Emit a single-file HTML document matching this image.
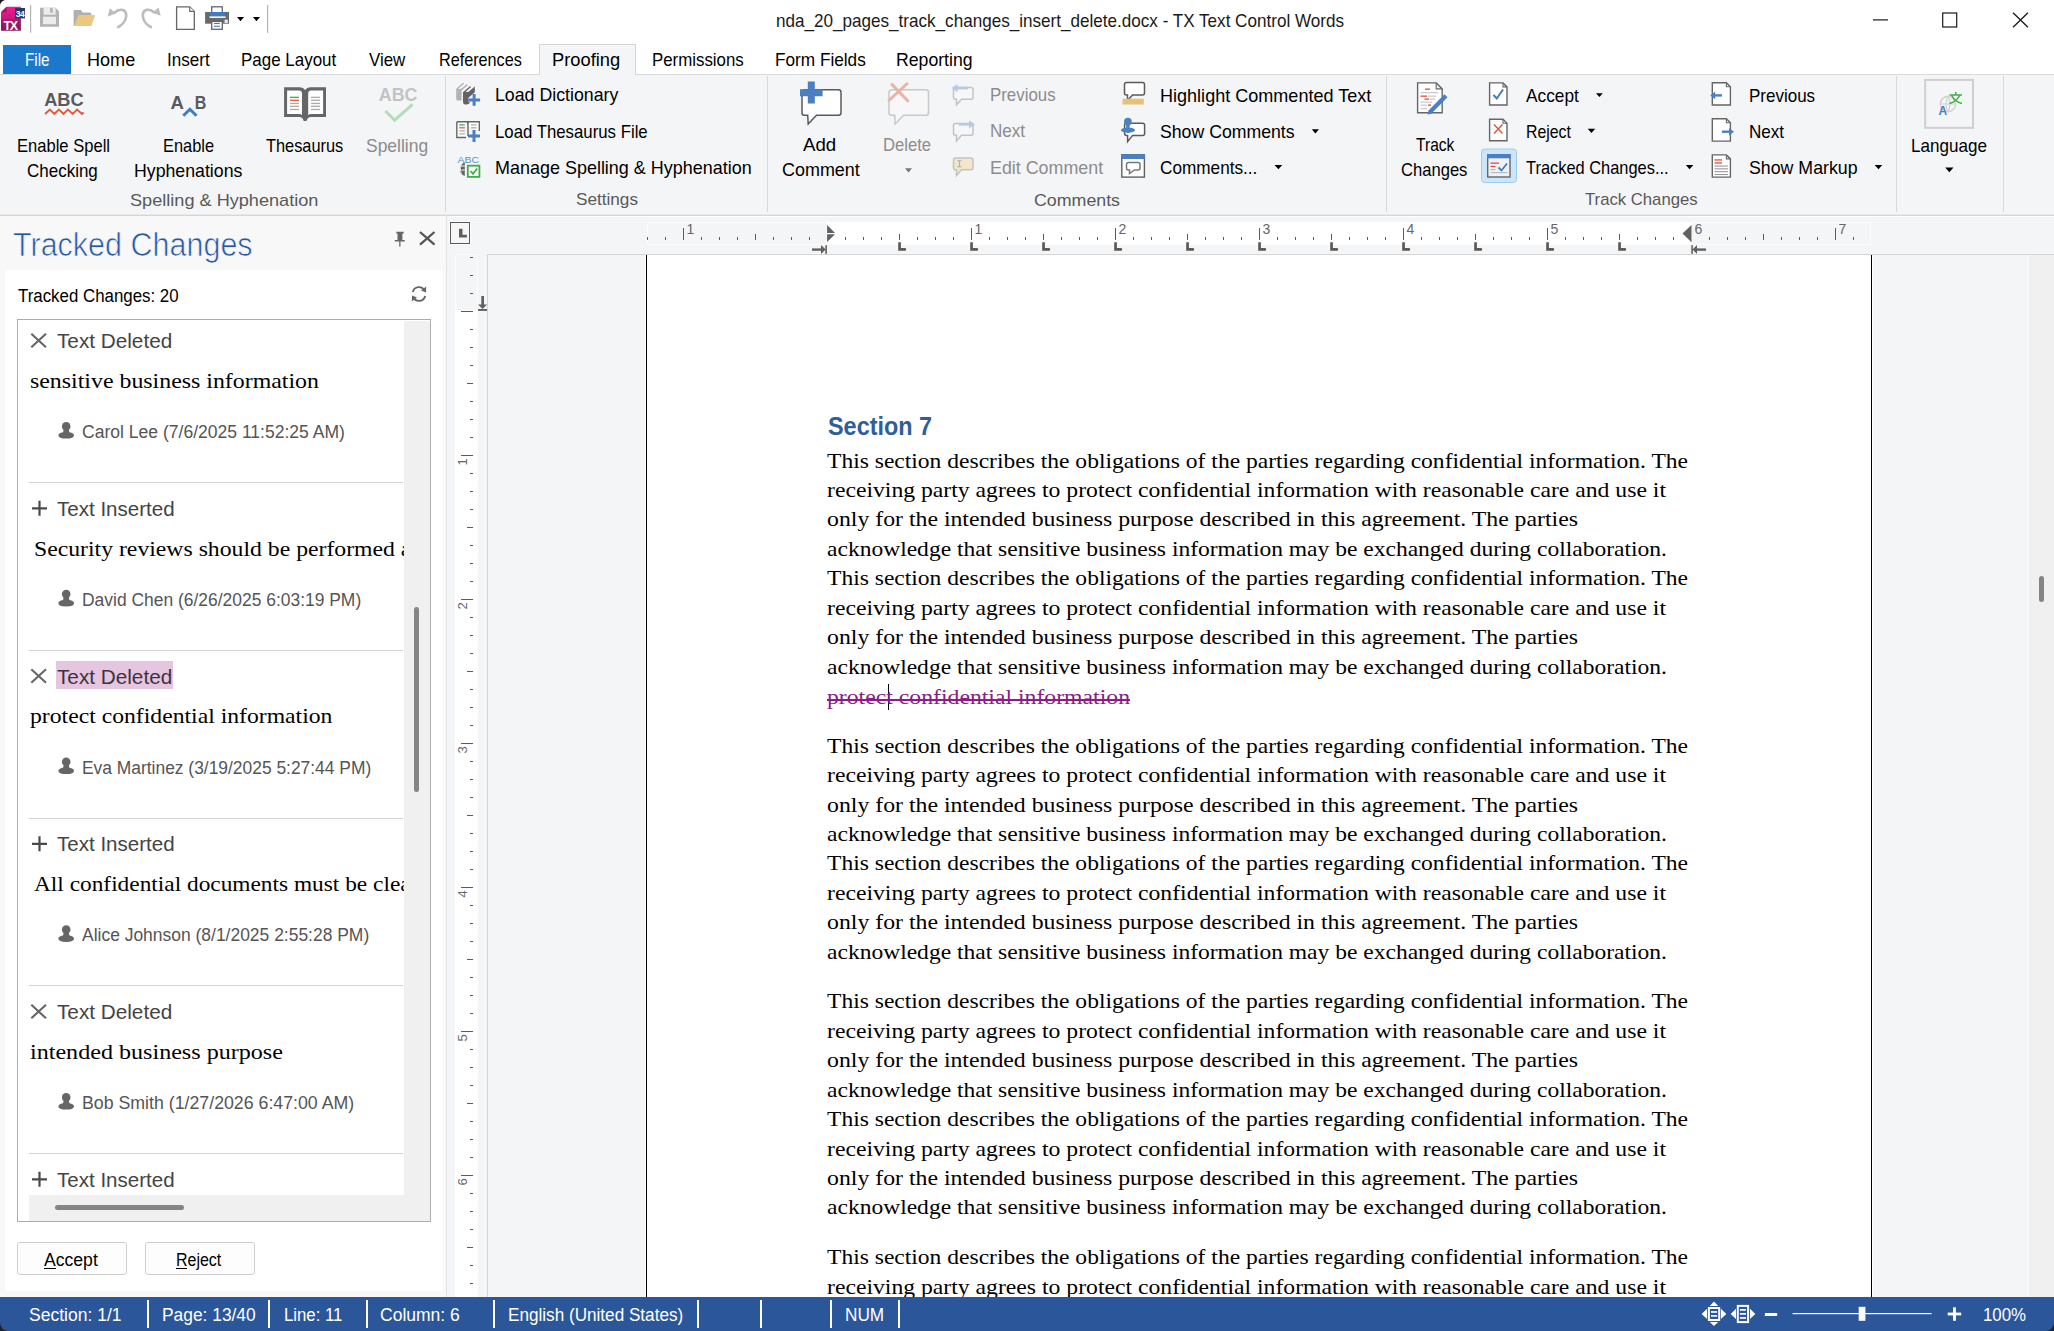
<!DOCTYPE html>
<html><head><meta charset="utf-8"><title>TX Text Control Words</title>
<style>
html,body{margin:0;padding:0;}
body{width:2054px;height:1331px;overflow:hidden;position:relative;background:#fff;font-family:"Liberation Sans",sans-serif;}
.t{position:absolute;white-space:pre;line-height:1;transform-origin:0 0;font-kerning:normal}
svg{overflow:visible}
</style></head><body>
<div style="position:absolute;left:0px;top:0px;width:2054px;height:75px;background:#fff"></div>
<div style="position:absolute;left:0px;top:74px;width:2054px;height:1px;background:#d9d9d9"></div>
<div style="position:absolute;left:0px;top:75px;width:2054px;height:139px;background:#f4f5f7"></div>
<div style="position:absolute;left:0px;top:214px;width:2054px;height:1px;background:#e9e9e9"></div>
<div style="position:absolute;left:0px;top:215px;width:2054px;height:1px;background:#d6d6d6"></div>
<div style="position:absolute;left:3px;top:45px;width:68px;height:29px;background:#1b79cc"></div>
<div style="position:absolute;left:539px;top:44px;width:97px;height:31px;background:#f4f5f7;border:1px solid #d6d6d6;border-bottom:none;box-sizing:border-box"></div>
<div style="position:absolute;left:445px;top:76px;width:1px;height:136px;background:#d9d9d9"></div>
<div style="position:absolute;left:767px;top:76px;width:1px;height:136px;background:#d9d9d9"></div>
<div style="position:absolute;left:1386px;top:76px;width:1px;height:136px;background:#d9d9d9"></div>
<div style="position:absolute;left:1896px;top:76px;width:1px;height:136px;background:#d9d9d9"></div>
<div style="position:absolute;left:2003px;top:76px;width:1px;height:136px;background:#d9d9d9"></div>
<div style="position:absolute;left:0px;top:216px;width:446px;height:1081px;background:#f8f8f8"></div>
<div style="position:absolute;left:446px;top:216px;width:1px;height:1081px;background:#e3e3e3"></div>
<div style="position:absolute;left:5px;top:270px;width:438px;height:1021px;background:#fff"></div>
<div style="position:absolute;left:17px;top:319px;width:414px;height:903px;border:1px solid #adadad;box-sizing:border-box;background:#fff"></div>
<div style="position:absolute;left:29px;top:482px;width:374px;height:1px;background:#d4d4d4"></div>
<div style="position:absolute;left:29px;top:650px;width:374px;height:1px;background:#d4d4d4"></div>
<div style="position:absolute;left:29px;top:818px;width:374px;height:1px;background:#d4d4d4"></div>
<div style="position:absolute;left:29px;top:985px;width:374px;height:1px;background:#d4d4d4"></div>
<div style="position:absolute;left:29px;top:1153px;width:374px;height:1px;background:#d4d4d4"></div>
<div style="position:absolute;left:56px;top:661px;width:117px;height:28px;background:#e5c5df"></div>
<div style="position:absolute;left:17px;top:1242px;width:110px;height:33px;border:1px solid #cfcfcf;border-radius:3px;background:#fdfdfd;box-sizing:border-box"></div>
<div style="position:absolute;left:145px;top:1242px;width:110px;height:33px;border:1px solid #cfcfcf;border-radius:3px;background:#fdfdfd;box-sizing:border-box"></div>
<div style="position:absolute;left:447px;top:216px;width:1607px;height:1081px;background:#f4f5f7"></div>
<div style="position:absolute;left:449px;top:216px;width:1605px;height:1px;background:#fff"></div>
<div style="position:absolute;left:449px;top:221px;width:22px;height:24px;background:#fff"></div>
<div style="position:absolute;left:450px;top:222px;width:20px;height:22px;border:1px solid #5a5a5a;box-sizing:border-box;background:#f6f6f6"></div>
<svg style="position:absolute;left:450px;top:222px;" width="20" height="22" viewBox="0 0 20 22"><path d="M9 6.8 V15.6 H16.9 V12.7 H12.5 V6.8 Z" fill="#5f5f5f"/></svg>
<div style="position:absolute;left:647px;top:222px;width:180px;height:23px;background:#f4f5f7;border:1px solid #fbfbfb;box-sizing:border-box"></div>
<div style="position:absolute;left:827px;top:222px;width:864px;height:23px;background:#fff"></div>
<div style="position:absolute;left:1691px;top:222px;width:180px;height:23px;background:#f4f5f7;border:1px solid #fbfbfb;box-sizing:border-box"></div>
<div style="position:absolute;left:487px;top:253px;width:1567px;height:1px;background:#f6f6f6"></div>
<div style="position:absolute;left:487px;top:254px;width:1567px;height:1px;background:#d5d5d5"></div>
<div style="position:absolute;left:455px;top:254px;width:23px;height:1043px;background:#fff"></div>
<div style="position:absolute;left:455px;top:254px;width:23px;height:57px;background:#f4f5f7;border:1px solid #fbfbfb;box-sizing:border-box"></div>
<div style="position:absolute;left:487px;top:254px;width:1px;height:1043px;background:#d4d4d4"></div>
<div style="position:absolute;left:645px;top:255px;width:1228px;height:1042px;background:#fff"></div>
<div style="position:absolute;left:646px;top:255px;width:1px;height:1042px;background:#000"></div>
<div style="position:absolute;left:1871px;top:255px;width:1px;height:1042px;background:#000"></div>
<div style="position:absolute;left:2028px;top:255px;width:1px;height:1042px;background:#fafafa"></div>
<div style="position:absolute;left:2029px;top:255px;width:25px;height:1042px;background:#f0f0f0"></div>
<div style="position:absolute;left:2039px;top:576px;width:5px;height:26px;background:#858585;border-radius:3px"></div>
<div style="position:absolute;left:44px;top:1268px;width:12px;height:1px;background:#000"></div>
<div style="position:absolute;left:176px;top:1268px;width:11px;height:1px;background:#000"></div>
<div style="position:absolute;left:827px;top:699.2px;width:303px;height:1.6px;background:#8b1c88"></div>
<div style="position:absolute;left:888px;top:684px;width:1px;height:26px;background:#000"></div>
<svg style="position:absolute;left:0;top:0" width="2054" height="1331" viewBox="0 0 2054 1331"><path d="M0 0 H5 Q1 1 0 5 Z" fill="#1a1a1a"/><defs><linearGradient id="gapp" x1="0" y1="0" x2="0" y2="1"><stop offset="0" stop-color="#f01b90"/><stop offset="0.5" stop-color="#c8187e"/><stop offset="0.56" stop-color="#a01a6c"/><stop offset="1" stop-color="#84195a"/></linearGradient></defs><path d="M6.5 6.8 H20.9 V30.7 H1 V12.3 Z" fill="url(#gapp)"/><path d="M1 12.3 L6.5 6.8 V12.3 Z" fill="#a01468"/><rect x="15" y="8" width="10" height="10.4" fill="#1d3b6b"/><text x="20" y="16.6" font-family="Liberation Sans" font-weight="700" font-size="8.5" fill="#fff" text-anchor="middle" letter-spacing="-0.6">34</text><text x="10.2" y="29.6" font-family="Liberation Sans" font-weight="700" font-size="12.5" fill="#fff" text-anchor="middle" letter-spacing="-1.2">TX</text><rect x="30" y="5" width="1.2" height="27.7" fill="#b5b5b5"/><rect x="267" y="5" width="1.2" height="27.9" fill="#b5b5b5"/><path d="M40 7.8 H55.5 L59 11.3 V26.7 H40 Z" fill="#b3b3b3"/><rect x="43.6" y="7.8" width="12" height="6.9" fill="#ececec"/><rect x="50.1" y="7.8" width="2.7" height="5" fill="#b3b3b3"/><rect x="43" y="16.7" width="13" height="7.5" fill="#ececec"/><path d="M73.6 11.3 Q73.6 10.1 75 10.1 H81 L82.5 12.6 H90 Q91.3 12.6 91.3 14 V25.9 H74.6 Q73.6 25.9 73.6 25 Z" fill="#b0b0b0"/><path d="M78.4 15.1 H94 Q95.2 15.1 94.8 16.3 L91.3 25.9 H75.5 Q74.3 25.9 74.8 24.7 Z" fill="#ecc77d"/><path d="M114.5 12.8 C119 8.2, 126.5 8.6, 126.2 16 C126 21, 121.5 25.5, 117.2 27.6" stroke="#bdbdbd" stroke-width="2.7" fill="none"/><path d="M107.7 16.4 L109.8 8.2 L116.2 13.4 Z" fill="#bdbdbd"/><path d="M154.5 12.8 C150 8.2, 142.5 8.6, 142.8 16 C143 21, 147.5 25.5, 151.8 27.6" stroke="#bdbdbd" stroke-width="2.7" fill="none"/><path d="M160.7 15.8 L158.6 7.6 L152.2 12.8 Z" fill="#bdbdbd"/><path d="M176.6 6.9 H189.8 L194.3 11.4 V29.3 H176.6 Z" fill="#fff" stroke="#666" stroke-width="1.3"/><path d="M189.8 6.9 V11.4 H194.3" fill="#fff" stroke="#666" stroke-width="1.2"/><rect x="211.7" y="6.8" width="10.6" height="6.6" fill="#fff" stroke="#666" stroke-width="1.3"/><rect x="205.1" y="12" width="23.9" height="11.7" fill="#6a6a6a"/><rect x="210" y="12" width="15" height="4.4" fill="#3f7cc0"/><rect x="209.5" y="16.4" width="16" height="1.5" fill="#fff"/><rect x="224.6" y="19.7" width="3.2" height="3.2" fill="#eee"/><rect x="211.7" y="21.4" width="10.6" height="7.9" fill="#fff" stroke="#666" stroke-width="1.3"/><rect x="214" y="22.9" width="5.8" height="1.1" fill="#3f7cc0"/><rect x="214" y="25.7" width="5.8" height="1.1" fill="#3f7cc0"/><path d="M237 17 H244 L240.5 21.3 Z" fill="#000"/><path d="M252.9 17 H260 L256.45 21.3 Z" fill="#000"/><rect x="1873" y="19.3" width="15" height="1.2" fill="#1a1a1a"/><rect x="1942.7" y="13" width="14" height="14" fill="none" stroke="#1a1a1a" stroke-width="1.2"/><path d="M2013 12.7 L2028 27.2 M2028 12.7 L2013 27.2" stroke="#1a1a1a" stroke-width="1.3"/><text x="44.2" y="106.3" font-family="Liberation Sans" font-weight="700" font-size="19" fill="#5a5a5a" textLength="39.5" lengthAdjust="spacingAndGlyphs">ABC</text><path d="M45 114 L49.9 109.5 L54.3 114 L58.9 109.5 L63.5 114 L67.9 109.5 L72.7 114 L77.1 109.5 L82 114 L83.6 112.5" stroke="#de5b3c" stroke-width="1.9" fill="none"/><text x="170.6" y="108.5" font-family="Liberation Sans" font-weight="700" font-size="19" fill="#5a5a5a" textLength="13.4" lengthAdjust="spacingAndGlyphs">A</text><text x="194.8" y="108.5" font-family="Liberation Sans" font-weight="700" font-size="19" fill="#5a5a5a" textLength="11.6" lengthAdjust="spacingAndGlyphs">B</text><path d="M183.3 115.8 L189.9 109.3 L196.5 115.8" stroke="#3f7cc0" stroke-width="3" fill="none"/><path d="M284.1 87.3 H300 Q303.5 87.3 305.1 90 Q306.7 87.3 310.2 87.3 H326 V117 H311 Q307.5 117 306.5 120.9 H303.7 Q302.7 117 299.2 117 H284.1 Z" fill="#666"/><path d="M287.1 90.6 H299 Q302 90.6 302 93.6 V115.1 Q301 114 298.5 114 H287.1 Z" fill="#fff"/><path d="M323.1 90.6 H311.2 Q308.2 90.6 308.2 93.6 V115.1 Q309.2 114 311.7 114 H323.1 Z" fill="#fff"/><rect x="290" y="96.7" width="9" height="1.3" fill="#3cb043"/><rect x="311" y="96.7" width="9" height="1.3" fill="#aaa"/><rect x="290" y="99.60000000000001" width="9" height="1.3" fill="#de5b3c"/><rect x="311" y="99.60000000000001" width="9" height="1.3" fill="#aaa"/><rect x="290" y="102.80000000000001" width="9" height="1.3" fill="#aaa"/><rect x="311" y="102.80000000000001" width="9" height="1.3" fill="#aaa"/><rect x="290" y="105.7" width="9" height="1.3" fill="#aaa"/><rect x="311" y="105.7" width="9" height="1.3" fill="#aaa"/><rect x="290" y="108.80000000000001" width="9" height="1.3" fill="#aaa"/><rect x="311" y="108.80000000000001" width="9" height="1.3" fill="#aaa"/><text x="378.8" y="100.5" font-family="Liberation Sans" font-weight="700" font-size="19" fill="#c3c3c3" textLength="38.6" lengthAdjust="spacingAndGlyphs">ABC</text><path d="M385.5 111 L394.6 120.2 L412.6 104.3" stroke="#b3ddb7" stroke-width="3" fill="none"/><path d="M456.2 88.8 L462.6 82.9 Q464.3 82.2 463.8 83.8 L458.3 88.7 Q459.5 89.3 461.6 88.6 L466.2 84.4 Q467.9 83.6 467.5 85.4 L461.6 90.6 V100.6 H457.8 Q456.2 100.6 456.2 99 Z" fill="#b3b3b3"/><path d="M463 92.2 L469.6 86.4 Q471.2 85.6 470.8 87.3 L465.6 91.8 Q466.8 92.4 468.6 91.8 L474.8 86.6 V92.2 L468.2 98 V101.5 L470 102.5 Q469 104.4 466.5 104.4 H465 Q463 104.4 463 102 Z" fill="#636363"/><path d="M468.1 100 H480.1 M474.1 94 V105.7" stroke="#4a7fc1" stroke-width="3"/><path d="M456.8 121.7 H467.5 Q468 126 468 126 V121.7 H479.3 V131 M468 126 V136 M456.8 121.7 V137.5 H466" stroke="#666" stroke-width="1.4" fill="#fff"/><rect x="459.2" y="124.3" width="5.6" height="1.2" fill="#3cb043"/><rect x="459.2" y="127.2" width="5.6" height="1.2" fill="#de5b3c"/><rect x="459.2" y="130.3" width="5.6" height="1.2" fill="#aaa"/><rect x="459.2" y="133.3" width="5.6" height="1.2" fill="#aaa"/><rect x="471" y="124.3" width="5.6" height="1.2" fill="#aaa"/><rect x="471" y="127.2" width="5.6" height="1.2" fill="#aaa"/><path d="M468 136 H480 M474 130 V142" stroke="#4a7fc1" stroke-width="3"/><text x="457.6" y="162.8" font-family="Liberation Sans" font-size="9.5" fill="#5b8fd0" textLength="21.4" lengthAdjust="spacingAndGlyphs">ABC</text><path d="M464.8 162.6 A7 7 0 0 0 464.8 176 Z" fill="#666"/><path d="M459 166 H464.8 M458.2 170 H464.8 M461.5 163 Q459.5 169 461.5 175.5" stroke="#f3f4f6" stroke-width="1"/><rect x="467.8" y="165.7" width="11.6" height="11.2" fill="#fff" stroke="#3cb043" stroke-width="1.8"/><path d="M470.5 171 L473 173.8 L477.2 168.5" stroke="#3cb043" stroke-width="1.8" fill="none"/><path d="M805 89.8 H838.5 Q841 89.8 841 92.3 V112.8 Q841 115.3 838.5 115.3 H816.5 L808.2 124 L807.7 115.3 H804.3 Q802 115.3 802 112.8 V92.8 Q802 89.8 805 89.8 Z" fill="#fff" stroke="#5a5a5a" stroke-width="1.5"/><path d="M800 92.8 H822.6 M811.3 81.6 V103.6" stroke="#4a7fc1" stroke-width="7"/><path d="M892 89.8 H926 Q928.5 89.8 928.5 92.3 V112.8 Q928.5 115.3 926 115.3 H903.5 L895.2 124 L894.7 115.3 H891.5 Q889 115.3 889 112.8 V92.8 Q889 89.8 892 89.8 Z" fill="#f7f7f7" stroke="#c9c9c9" stroke-width="1.5"/><path d="M888.3 101 L907.8 83 M891.2 83.6 L908.6 101.8" stroke="#e9b4a8" stroke-width="3"/><path d="M905 168.2 H912 L908.5 172.4 Z" fill="#777"/><path d="M955.5 87.5 H971 Q973 87.5 973 89.5 V97.3 Q973 99.3 971 99.3 H961.5 L956.5 104.9 L956.5 99.3 H955.5 Q953.5 99.3 953.5 97.3 V89.5 Q953.5 87.5 955.5 87.5 Z" fill="#f7f7f7" stroke="#c3c3c3" stroke-width="1.5"/><path d="M956 88.1 H968" stroke="#b3cbe5" stroke-width="2.6"/><path d="M951.5 88.1 L957.5 84 V92.2 Z" fill="#b3cbe5"/><path d="M955.5 123.5 H971 Q973 123.5 973 125.5 V133.3 Q973 135.3 971 135.3 H961.5 L956.5 141 L956.5 135.3 H955.5 Q953.5 135.3 953.5 133.3 V125.5 Q953.5 123.5 955.5 123.5 Z" fill="#f7f7f7" stroke="#c3c3c3" stroke-width="1.5"/><path d="M958.8 124.3 H970" stroke="#b3cbe5" stroke-width="2.6"/><path d="M975 124.3 L969 120.2 V128.4 Z" fill="#b3cbe5"/><path d="M955.5 158 H971 Q973 158 973 160 V167.7 Q973 169.7 971 169.7 H961.5 L956.5 175.4 L956.5 169.7 H955.5 Q953.5 169.7 953.5 167.7 V160 Q953.5 158 955.5 158 Z" fill="#f4e6cb" stroke="#c3c3c3" stroke-width="1.5"/><path d="M957.3 160.8 H961.5 M959.4 160.8 V166.7 M957.3 166.7 H961.5" stroke="#aaa" stroke-width="1"/><path d="M1126.5 82.5 H1142.5 Q1144.5 82.5 1144.5 84.5 V93 Q1144.5 95 1142.5 95 H1132.5 L1127.5 100.5 L1127.5 95 H1126.5 Q1124.5 95 1124.5 93 V84.5 Q1124.5 82.5 1126.5 82.5 Z" fill="#fff" stroke="#5a5a5a" stroke-width="1.5"/><rect x="1122.6" y="98.7" width="21.2" height="5.8" fill="#e8c274"/><path d="M1126.6 123.2 H1142.6 Q1144.6 123.2 1144.6 125.2 V133.4 Q1144.6 135.4 1142.6 135.4 H1132.6 L1127.6 141.7 L1127.6 135.4 H1126.6 Q1124.6 135.4 1124.6 133.4 V125.2 Q1124.6 123.2 1126.6 123.2 Z" fill="#fff" stroke="#5a5a5a" stroke-width="1.5"/><circle cx="1127.9" cy="121.6" r="3.9" fill="#4a82c0"/><rect x="1126.2" y="124" width="3.4" height="4" fill="#4a82c0"/><ellipse cx="1128" cy="130.2" rx="6.9" ry="2.7" fill="#4a82c0"/><rect x="1121.8" y="154.8" width="22.6" height="22.3" fill="#fff" stroke="#5f5f5f" stroke-width="1.4"/><rect x="1121.2" y="154.2" width="23.8" height="4.8" fill="#4a7fc1"/><path d="M1128.5 162.5 H1138 Q1140 162.5 1140 164.5 V168 Q1140 170 1138 170 H1134.5 L1129.5 173.5 L1129.5 170 H1128.5 Q1126.5 170 1126.5 168 V164.5 Q1126.5 162.5 1128.5 162.5 Z" fill="#fff" stroke="#777" stroke-width="1.5"/><path d="M1311.8 129.2 H1319 L1315.4 133.5 Z" fill="#000"/><path d="M1274.5 165 H1282.3 L1278.4 169.3 Z" fill="#000"/><path d="M1417.6 82.9 H1436.2 L1442.2 88.9 V112.8 H1417.6 Z" fill="#fff" stroke="#666" stroke-width="1.4"/><path d="M1436.2 82.9 V88.9 H1442.2" fill="none" stroke="#666" stroke-width="1.1199999999999999"/><rect x="1425" y="88.5" width="5" height="1.3" fill="#e04c3c"/><rect x="1420.5" y="92" width="17.5" height="1.3" fill="#ccc"/><rect x="1420.5" y="95.5" width="6.5" height="1.3" fill="#e04c3c"/><rect x="1428" y="95.5" width="8" height="1.3" fill="#ccc"/><rect x="1424.5" y="98.5" width="4.5" height="1.3" fill="#e04c3c"/><rect x="1430" y="98.5" width="5" height="1.3" fill="#ccc"/><rect x="1420.5" y="101.5" width="11.5" height="1.3" fill="#ccc"/><rect x="1428" y="104.5" width="3" height="1.3" fill="#e04c3c"/><rect x="1420.5" y="104.5" width="6.5" height="1.3" fill="#ccc"/><rect x="1420.5" y="108" width="6.5" height="1.3" fill="#ccc"/><path d="M1429.5 112.5 L1446 95.7" stroke="#4a7fc1" stroke-width="4.2"/><path d="M1427.5 114.8 L1428.3 111 L1431 113.5 Z" fill="#4a7fc1"/><path d="M1489.6 82.9 H1503 L1507 86.9 V105 H1489.6 Z" fill="#fff" stroke="#666" stroke-width="1.4"/><path d="M1503 82.9 V86.9 H1507" fill="none" stroke="#666" stroke-width="1.1199999999999999"/><path d="M1493.5 95 L1496.8 98.5 L1503 89.5" stroke="#3f7cc0" stroke-width="2" fill="none"/><path d="M1489.6 119.2 H1503 L1507 123.2 V140.7 H1489.6 Z" fill="#fff" stroke="#666" stroke-width="1.4"/><path d="M1503 119.2 V123.2 H1507" fill="none" stroke="#666" stroke-width="1.1199999999999999"/><path d="M1494 124.5 L1502.5 133.5 M1502.5 124.5 L1494 133.5" stroke="#d9553c" stroke-width="1.4"/><rect x="1481.5" y="149" width="35" height="33.5" rx="3" fill="#cce5f8" stroke="#9bcdf3" stroke-width="1"/><rect x="1487.7" y="154.7" width="22.3" height="22.3" fill="#eef2f6" stroke="#666" stroke-width="1.4"/><rect x="1487" y="154" width="23.7" height="4.3" fill="#4a7fc1"/><rect x="1490.5" y="162.5" width="8.5" height="1.3" fill="#e04c3c"/><rect x="1490.5" y="165.8" width="5" height="1.3" fill="#e04c3c"/><rect x="1490.5" y="169" width="5" height="1.2" fill="#bbb"/><rect x="1490.5" y="172" width="17" height="1.2" fill="#bbb"/><path d="M1498.5 167.5 L1501.5 170.5 L1507 163.5" stroke="#3f7cc0" stroke-width="1.8" fill="none"/><path d="M1596 93.2 H1602.8 L1599.4 97 Z" fill="#000"/><path d="M1587.7 128.7 H1595.2 L1591.45 133.1 Z" fill="#000"/><path d="M1685.8 165 H1693.3 L1689.55 169.3 Z" fill="#000"/><path d="M1712.3 82.8 H1726.4 L1730.4 86.8 V105 H1712.3 Z" fill="#fff" stroke="#666" stroke-width="1.4"/><path d="M1726.4 82.8 V86.8 H1730.4" fill="none" stroke="#666" stroke-width="1.1199999999999999"/><path d="M1714 95.4 H1722" stroke="#4a7fc1" stroke-width="2.4"/><path d="M1710.3 95.4 L1715.2 91.6 V99.2 Z" fill="#4a7fc1"/><path d="M1712.3 118.7 H1726.4 L1730.4 122.7 V141.1 H1712.3 Z" fill="#fff" stroke="#666" stroke-width="1.4"/><path d="M1726.4 118.7 V122.7 H1730.4" fill="none" stroke="#666" stroke-width="1.1199999999999999"/><path d="M1721.9 131.7 H1730" stroke="#4a7fc1" stroke-width="2.4"/><path d="M1734 131.7 L1729 127.9 V135.5 Z" fill="#4a7fc1"/><path d="M1712.3 154.9 H1726.4 L1730.4 158.9 V177.1 H1712.3 Z" fill="#fff" stroke="#666" stroke-width="1.4"/><path d="M1726.4 154.9 V158.9 H1730.4" fill="none" stroke="#666" stroke-width="1.1199999999999999"/><rect x="1714.5" y="159.3" width="7.5" height="1.3" fill="#e04c3c"/><rect x="1714.5" y="162.3" width="7.5" height="1.3" fill="#e04c3c"/><rect x="1714.5" y="165.5" width="13.5" height="1.1" fill="#999"/><rect x="1714.5" y="168.3" width="13.5" height="1.1" fill="#999"/><rect x="1714.5" y="171.1" width="13.5" height="1.1" fill="#999"/><rect x="1714.5" y="174" width="13.5" height="1.1" fill="#999"/><path d="M1874.7 165 H1882.3 L1878.5 169.3 Z" fill="#000"/><rect x="1925.2" y="79.9" width="47.8" height="47.9" fill="none" stroke="#cfcfcf" stroke-width="2"/><circle cx="1948" cy="104" r="7.6" fill="none" stroke="#d3d3d3" stroke-width="1.6"/><path d="M1940.5 104 H1955.5 M1948 96.5 Q1944 104 1948 111.5 Q1952 104 1948 96.5" stroke="#d3d3d3" stroke-width="1.2" fill="none"/><text x="1938.5" y="115.2" font-family="Liberation Sans" font-weight="700" font-size="12" fill="#4a7fc1">A</text><path d="M1949.5 95 H1962 M1955.7 92 V95 M1951.5 95 Q1955 102 1962 103.5 M1960 95 Q1956 102 1949.5 103.5" stroke="#3cb043" stroke-width="1.5" fill="none"/><path d="M1945.2 167.6 H1953.5 L1949.35 172.2 Z" fill="#000"/><path d="M396.3 231.8 H403.7 V233.5 H402.4 V240 H404.8 V241.6 H394.8 V240 H397.5 V233.5 H396.3 Z" fill="#666"/><rect x="399.2" y="241" width="1.3" height="5.5" fill="#666"/><path d="M420 232 L434.5 244.6 M434.5 232 L420 244.6" stroke="#555" stroke-width="2.3"/><path d="M412.8 292 A6.4 6.4 0 0 1 424.5 290.2 M425.2 296 A6.4 6.4 0 0 1 413.5 297.8" stroke="#666" stroke-width="1.9" fill="none"/><path d="M426.2 286.5 L426 292.5 L421 290.5 Z M411.8 301.5 L412 295.5 L417 297.5 Z" fill="#666"/><path d="M31.3 333.8 L46 347.3 M46 333.8 L31.3 347.3" stroke="#666" stroke-width="2.1"/><circle cx="66.2" cy="426.4" r="4.3" fill="#666"/><path d="M63.8 429.5 H68.6 L69.5 432.3 Q74 433.0 74 435.5 Q74 438.6 66.2 438.6 Q58.4 438.6 58.4 435.5 Q58.4 433.0 63 432.3 Z" fill="#666"/><path d="M32 508.3 H47 M39.5 500.8 V515.8" stroke="#4a4a4a" stroke-width="2.2"/><circle cx="66.2" cy="594.1" r="4.3" fill="#666"/><path d="M63.8 597.2 H68.6 L69.5 600.0 Q74 600.8 74 603.2 Q74 606.4 66.2 606.4 Q58.4 606.4 58.4 603.2 Q58.4 600.8 63 600.0 Z" fill="#666"/><path d="M31.3 669.3 L46 682.8 M46 669.3 L31.3 682.8" stroke="#666" stroke-width="2.1"/><circle cx="66.2" cy="761.9" r="4.3" fill="#666"/><path d="M63.8 765.0 H68.6 L69.5 767.8 Q74 768.5 74 771.0 Q74 774.1 66.2 774.1 Q58.4 774.1 58.4 771.0 Q58.4 768.5 63 767.8 Z" fill="#666"/><path d="M32 843.8 H47 M39.5 836.3 V851.3" stroke="#4a4a4a" stroke-width="2.2"/><circle cx="66.2" cy="929.6" r="4.3" fill="#666"/><path d="M63.8 932.8 H68.6 L69.5 935.5 Q74 936.2 74 938.8 Q74 941.9 66.2 941.9 Q58.4 941.9 58.4 938.8 Q58.4 936.2 63 935.5 Z" fill="#666"/><path d="M31.3 1004.8 L46 1018.3 M46 1004.8 L31.3 1018.3" stroke="#666" stroke-width="2.1"/><circle cx="66.2" cy="1097.4" r="4.3" fill="#666"/><path d="M63.8 1100.5 H68.6 L69.5 1103.3 Q74 1104.0 74 1106.5 Q74 1109.6 66.2 1109.6 Q58.4 1109.6 58.4 1106.5 Q58.4 1104.0 63 1103.3 Z" fill="#666"/><path d="M32 1179.3 H47 M39.5 1171.8 V1186.8" stroke="#4a4a4a" stroke-width="2.2"/></svg>
<svg style="position:absolute;left:0;top:0" width="2054" height="1331" viewBox="0 0 2054 1331"><rect x="647" y="237" width="1" height="3" fill="#5c5c5c"/><rect x="665" y="237" width="1" height="3" fill="#5c5c5c"/><rect x="683" y="228" width="1" height="12" fill="#5c5c5c"/><text x="686.5" y="233.8" font-family="Liberation Sans" font-size="14" fill="#666">1</text><rect x="701" y="237" width="1" height="3" fill="#5c5c5c"/><rect x="719" y="237" width="1" height="3" fill="#5c5c5c"/><rect x="737" y="237" width="1" height="3" fill="#5c5c5c"/><rect x="755" y="234" width="1" height="6" fill="#5c5c5c"/><rect x="773" y="237" width="1" height="3" fill="#5c5c5c"/><rect x="791" y="237" width="1" height="3" fill="#5c5c5c"/><rect x="809" y="237" width="1" height="3" fill="#5c5c5c"/><rect x="845" y="237" width="1" height="3" fill="#5c5c5c"/><rect x="863" y="237" width="1" height="3" fill="#5c5c5c"/><rect x="881" y="237" width="1" height="3" fill="#5c5c5c"/><rect x="899" y="234" width="1" height="6" fill="#5c5c5c"/><rect x="917" y="237" width="1" height="3" fill="#5c5c5c"/><rect x="935" y="237" width="1" height="3" fill="#5c5c5c"/><rect x="953" y="237" width="1" height="3" fill="#5c5c5c"/><rect x="971" y="228" width="1" height="12" fill="#5c5c5c"/><text x="974.5" y="233.8" font-family="Liberation Sans" font-size="14" fill="#666">1</text><rect x="989" y="237" width="1" height="3" fill="#5c5c5c"/><rect x="1007" y="237" width="1" height="3" fill="#5c5c5c"/><rect x="1025" y="237" width="1" height="3" fill="#5c5c5c"/><rect x="1043" y="234" width="1" height="6" fill="#5c5c5c"/><rect x="1061" y="237" width="1" height="3" fill="#5c5c5c"/><rect x="1079" y="237" width="1" height="3" fill="#5c5c5c"/><rect x="1097" y="237" width="1" height="3" fill="#5c5c5c"/><rect x="1115" y="228" width="1" height="12" fill="#5c5c5c"/><text x="1118.5" y="233.8" font-family="Liberation Sans" font-size="14" fill="#666">2</text><rect x="1133" y="237" width="1" height="3" fill="#5c5c5c"/><rect x="1151" y="237" width="1" height="3" fill="#5c5c5c"/><rect x="1169" y="237" width="1" height="3" fill="#5c5c5c"/><rect x="1187" y="234" width="1" height="6" fill="#5c5c5c"/><rect x="1205" y="237" width="1" height="3" fill="#5c5c5c"/><rect x="1223" y="237" width="1" height="3" fill="#5c5c5c"/><rect x="1241" y="237" width="1" height="3" fill="#5c5c5c"/><rect x="1259" y="228" width="1" height="12" fill="#5c5c5c"/><text x="1262.5" y="233.8" font-family="Liberation Sans" font-size="14" fill="#666">3</text><rect x="1277" y="237" width="1" height="3" fill="#5c5c5c"/><rect x="1295" y="237" width="1" height="3" fill="#5c5c5c"/><rect x="1313" y="237" width="1" height="3" fill="#5c5c5c"/><rect x="1331" y="234" width="1" height="6" fill="#5c5c5c"/><rect x="1349" y="237" width="1" height="3" fill="#5c5c5c"/><rect x="1367" y="237" width="1" height="3" fill="#5c5c5c"/><rect x="1385" y="237" width="1" height="3" fill="#5c5c5c"/><rect x="1403" y="228" width="1" height="12" fill="#5c5c5c"/><text x="1406.5" y="233.8" font-family="Liberation Sans" font-size="14" fill="#666">4</text><rect x="1421" y="237" width="1" height="3" fill="#5c5c5c"/><rect x="1439" y="237" width="1" height="3" fill="#5c5c5c"/><rect x="1457" y="237" width="1" height="3" fill="#5c5c5c"/><rect x="1475" y="234" width="1" height="6" fill="#5c5c5c"/><rect x="1493" y="237" width="1" height="3" fill="#5c5c5c"/><rect x="1511" y="237" width="1" height="3" fill="#5c5c5c"/><rect x="1529" y="237" width="1" height="3" fill="#5c5c5c"/><rect x="1547" y="228" width="1" height="12" fill="#5c5c5c"/><text x="1550.5" y="233.8" font-family="Liberation Sans" font-size="14" fill="#666">5</text><rect x="1565" y="237" width="1" height="3" fill="#5c5c5c"/><rect x="1583" y="237" width="1" height="3" fill="#5c5c5c"/><rect x="1601" y="237" width="1" height="3" fill="#5c5c5c"/><rect x="1619" y="234" width="1" height="6" fill="#5c5c5c"/><rect x="1637" y="237" width="1" height="3" fill="#5c5c5c"/><rect x="1655" y="237" width="1" height="3" fill="#5c5c5c"/><rect x="1673" y="237" width="1" height="3" fill="#5c5c5c"/><text x="1694.5" y="233.8" font-family="Liberation Sans" font-size="14" fill="#666">6</text><rect x="1709" y="237" width="1" height="3" fill="#5c5c5c"/><rect x="1727" y="237" width="1" height="3" fill="#5c5c5c"/><rect x="1745" y="237" width="1" height="3" fill="#5c5c5c"/><rect x="1763" y="234" width="1" height="6" fill="#5c5c5c"/><rect x="1781" y="237" width="1" height="3" fill="#5c5c5c"/><rect x="1799" y="237" width="1" height="3" fill="#5c5c5c"/><rect x="1817" y="237" width="1" height="3" fill="#5c5c5c"/><rect x="1835" y="228" width="1" height="12" fill="#5c5c5c"/><text x="1838.5" y="233.8" font-family="Liberation Sans" font-size="14" fill="#666">7</text><rect x="1853" y="237" width="1" height="3" fill="#5c5c5c"/><path d="M898.2 242.2 H900.9 V248 H905.9 V250.7 H898.2 Z" fill="#5a5a5a"/><path d="M970.2 242.2 H972.9 V248 H977.9 V250.7 H970.2 Z" fill="#5a5a5a"/><path d="M1042.2 242.2 H1044.9 V248 H1049.9 V250.7 H1042.2 Z" fill="#5a5a5a"/><path d="M1114.2 242.2 H1116.9 V248 H1121.9 V250.7 H1114.2 Z" fill="#5a5a5a"/><path d="M1186.2 242.2 H1188.9 V248 H1193.9 V250.7 H1186.2 Z" fill="#5a5a5a"/><path d="M1258.2 242.2 H1260.9 V248 H1265.9 V250.7 H1258.2 Z" fill="#5a5a5a"/><path d="M1330.2 242.2 H1332.9 V248 H1337.9 V250.7 H1330.2 Z" fill="#5a5a5a"/><path d="M1402.2 242.2 H1404.9 V248 H1409.9 V250.7 H1402.2 Z" fill="#5a5a5a"/><path d="M1474.2 242.2 H1476.9 V248 H1481.9 V250.7 H1474.2 Z" fill="#5a5a5a"/><path d="M1546.2 242.2 H1548.9 V248 H1553.9 V250.7 H1546.2 Z" fill="#5a5a5a"/><path d="M1618.2 242.2 H1620.9 V248 H1625.9 V250.7 H1618.2 Z" fill="#5a5a5a"/><path d="M827.1 224.9 L835 232.9 H827.1 Z M827.1 234.2 H835 L827.1 242 Z" fill="#616161"/><rect x="812" y="248.4" width="10" height="2.4" fill="#616161"/><path d="M821 245 L825.7 249.6 L821 253.9 Z" fill="#616161"/><rect x="825.3" y="245.2" width="1.6" height="8.7" fill="#616161"/><path d="M1691.5 224.9 L1682.5 233.5 L1691.5 242.2 Z" fill="#616161"/><rect x="1696" y="248.4" width="10" height="2.4" fill="#616161"/><path d="M1697 245 L1692.5 249.6 L1697 253.9 Z" fill="#616161"/><rect x="1691.3" y="245.2" width="1.6" height="8.7" fill="#616161"/><rect x="470" y="257" width="3" height="1" fill="#5c5c5c"/><rect x="470" y="275" width="3" height="1" fill="#5c5c5c"/><rect x="470" y="293" width="3" height="1" fill="#5c5c5c"/><rect x="461" y="311" width="12" height="1" fill="#5c5c5c"/><rect x="470" y="329" width="3" height="1" fill="#5c5c5c"/><rect x="470" y="347" width="3" height="1" fill="#5c5c5c"/><rect x="470" y="365" width="3" height="1" fill="#5c5c5c"/><rect x="467" y="383" width="6" height="1" fill="#5c5c5c"/><rect x="470" y="401" width="3" height="1" fill="#5c5c5c"/><rect x="470" y="419" width="3" height="1" fill="#5c5c5c"/><rect x="470" y="437" width="3" height="1" fill="#5c5c5c"/><rect x="461" y="455" width="12" height="1" fill="#5c5c5c"/><text transform="translate(466.6 458.2) rotate(-90)" font-family="Liberation Sans" font-size="13" fill="#666" text-anchor="end">1</text><rect x="470" y="473" width="3" height="1" fill="#5c5c5c"/><rect x="470" y="491" width="3" height="1" fill="#5c5c5c"/><rect x="470" y="509" width="3" height="1" fill="#5c5c5c"/><rect x="467" y="527" width="6" height="1" fill="#5c5c5c"/><rect x="470" y="545" width="3" height="1" fill="#5c5c5c"/><rect x="470" y="563" width="3" height="1" fill="#5c5c5c"/><rect x="470" y="581" width="3" height="1" fill="#5c5c5c"/><rect x="461" y="599" width="12" height="1" fill="#5c5c5c"/><text transform="translate(466.6 602.2) rotate(-90)" font-family="Liberation Sans" font-size="13" fill="#666" text-anchor="end">2</text><rect x="470" y="617" width="3" height="1" fill="#5c5c5c"/><rect x="470" y="635" width="3" height="1" fill="#5c5c5c"/><rect x="470" y="653" width="3" height="1" fill="#5c5c5c"/><rect x="467" y="671" width="6" height="1" fill="#5c5c5c"/><rect x="470" y="689" width="3" height="1" fill="#5c5c5c"/><rect x="470" y="707" width="3" height="1" fill="#5c5c5c"/><rect x="470" y="725" width="3" height="1" fill="#5c5c5c"/><rect x="461" y="743" width="12" height="1" fill="#5c5c5c"/><text transform="translate(466.6 746.2) rotate(-90)" font-family="Liberation Sans" font-size="13" fill="#666" text-anchor="end">3</text><rect x="470" y="761" width="3" height="1" fill="#5c5c5c"/><rect x="470" y="779" width="3" height="1" fill="#5c5c5c"/><rect x="470" y="797" width="3" height="1" fill="#5c5c5c"/><rect x="467" y="815" width="6" height="1" fill="#5c5c5c"/><rect x="470" y="833" width="3" height="1" fill="#5c5c5c"/><rect x="470" y="851" width="3" height="1" fill="#5c5c5c"/><rect x="470" y="869" width="3" height="1" fill="#5c5c5c"/><rect x="461" y="887" width="12" height="1" fill="#5c5c5c"/><text transform="translate(466.6 890.2) rotate(-90)" font-family="Liberation Sans" font-size="13" fill="#666" text-anchor="end">4</text><rect x="470" y="905" width="3" height="1" fill="#5c5c5c"/><rect x="470" y="923" width="3" height="1" fill="#5c5c5c"/><rect x="470" y="941" width="3" height="1" fill="#5c5c5c"/><rect x="467" y="959" width="6" height="1" fill="#5c5c5c"/><rect x="470" y="977" width="3" height="1" fill="#5c5c5c"/><rect x="470" y="995" width="3" height="1" fill="#5c5c5c"/><rect x="470" y="1013" width="3" height="1" fill="#5c5c5c"/><rect x="461" y="1031" width="12" height="1" fill="#5c5c5c"/><text transform="translate(466.6 1034.2) rotate(-90)" font-family="Liberation Sans" font-size="13" fill="#666" text-anchor="end">5</text><rect x="470" y="1049" width="3" height="1" fill="#5c5c5c"/><rect x="470" y="1067" width="3" height="1" fill="#5c5c5c"/><rect x="470" y="1085" width="3" height="1" fill="#5c5c5c"/><rect x="467" y="1103" width="6" height="1" fill="#5c5c5c"/><rect x="470" y="1121" width="3" height="1" fill="#5c5c5c"/><rect x="470" y="1139" width="3" height="1" fill="#5c5c5c"/><rect x="470" y="1157" width="3" height="1" fill="#5c5c5c"/><rect x="461" y="1175" width="12" height="1" fill="#5c5c5c"/><text transform="translate(466.6 1178.2) rotate(-90)" font-family="Liberation Sans" font-size="13" fill="#666" text-anchor="end">6</text><rect x="470" y="1193" width="3" height="1" fill="#5c5c5c"/><rect x="470" y="1211" width="3" height="1" fill="#5c5c5c"/><rect x="470" y="1229" width="3" height="1" fill="#5c5c5c"/><rect x="467" y="1247" width="6" height="1" fill="#5c5c5c"/><rect x="470" y="1265" width="3" height="1" fill="#5c5c5c"/><rect x="470" y="1283" width="3" height="1" fill="#5c5c5c"/><rect x="481.3" y="296" width="2.7" height="9.5" fill="#616161"/><path d="M478 304.6 H487 L482.6 309 Z" fill="#616161"/><rect x="478" y="309" width="9" height="1.9" fill="#616161"/></svg>
<div class="t" style="left:776.00px;top:10.91px;font-size:19px;font-family:'Liberation Sans',sans-serif;transform:scaleX(0.8993);color:#1a1a1a;">nda_20_pages_track_changes_insert_delete.docx - TX Text Control Words</div>
<div class="t" style="left:24.50px;top:49.91px;font-size:19px;font-family:'Liberation Sans',sans-serif;transform:scaleX(0.8000);color:#fff;">File</div>
<div class="t" style="left:87.30px;top:49.51px;font-size:19px;font-family:'Liberation Sans',sans-serif;transform:scaleX(0.9509);color:#000;">Home</div>
<div class="t" style="left:167.00px;top:49.51px;font-size:19px;font-family:'Liberation Sans',sans-serif;transform:scaleX(0.8984);color:#000;">Insert</div>
<div class="t" style="left:240.60px;top:49.51px;font-size:19px;font-family:'Liberation Sans',sans-serif;transform:scaleX(0.8922);color:#000;">Page Layout</div>
<div class="t" style="left:368.70px;top:49.51px;font-size:19px;font-family:'Liberation Sans',sans-serif;transform:scaleX(0.8888);color:#000;">View</div>
<div class="t" style="left:438.50px;top:49.51px;font-size:19px;font-family:'Liberation Sans',sans-serif;transform:scaleX(0.8521);color:#000;">References</div>
<div class="t" style="left:651.70px;top:49.51px;font-size:19px;font-family:'Liberation Sans',sans-serif;transform:scaleX(0.8871);color:#000;">Permissions</div>
<div class="t" style="left:774.60px;top:49.51px;font-size:19px;font-family:'Liberation Sans',sans-serif;transform:scaleX(0.9053);color:#000;">Form Fields</div>
<div class="t" style="left:896.40px;top:49.51px;font-size:19px;font-family:'Liberation Sans',sans-serif;transform:scaleX(0.9297);color:#000;">Reporting</div>
<div class="t" style="left:552.40px;top:49.91px;font-size:19px;font-family:'Liberation Sans',sans-serif;transform:scaleX(0.9635);color:#000;">Proofing</div>
<div class="t" style="left:17.00px;top:135.91px;font-size:19px;font-family:'Liberation Sans',sans-serif;transform:scaleX(0.8716);color:#000;">Enable Spell</div>
<div class="t" style="left:27.40px;top:160.81px;font-size:19px;font-family:'Liberation Sans',sans-serif;transform:scaleX(0.8937);color:#000;">Checking</div>
<div class="t" style="left:162.60px;top:135.91px;font-size:19px;font-family:'Liberation Sans',sans-serif;transform:scaleX(0.8619);color:#000;">Enable</div>
<div class="t" style="left:133.70px;top:160.81px;font-size:19px;font-family:'Liberation Sans',sans-serif;transform:scaleX(0.9328);color:#000;">Hyphenations</div>
<div class="t" style="left:265.60px;top:135.91px;font-size:19px;font-family:'Liberation Sans',sans-serif;transform:scaleX(0.8610);color:#000;">Thesaurus</div>
<div class="t" style="left:366.30px;top:135.91px;font-size:19px;font-family:'Liberation Sans',sans-serif;transform:scaleX(0.9185);color:#8c8c8c;">Spelling</div>
<div class="t" style="left:130.40px;top:191.61px;font-size:17px;font-family:'Liberation Sans',sans-serif;transform:scaleX(1.0660);color:#595959;">Spelling &amp; Hyphenation</div>
<div class="t" style="left:494.60px;top:85.41px;font-size:19px;font-family:'Liberation Sans',sans-serif;transform:scaleX(0.9339);color:#000;">Load Dictionary</div>
<div class="t" style="left:494.60px;top:121.51px;font-size:19px;font-family:'Liberation Sans',sans-serif;transform:scaleX(0.8833);color:#000;">Load Thesaurus File</div>
<div class="t" style="left:494.60px;top:157.71px;font-size:19px;font-family:'Liberation Sans',sans-serif;transform:scaleX(0.9456);color:#000;">Manage Spelling &amp; Hyphenation</div>
<div class="t" style="left:575.80px;top:191.41px;font-size:17px;font-family:'Liberation Sans',sans-serif;transform:scaleX(1.0092);color:#595959;">Settings</div>
<div class="t" style="left:803.00px;top:135.41px;font-size:19px;font-family:'Liberation Sans',sans-serif;transform:scaleX(0.9819);color:#000;">Add</div>
<div class="t" style="left:781.60px;top:160.21px;font-size:19px;font-family:'Liberation Sans',sans-serif;transform:scaleX(0.9446);color:#000;">Comment</div>
<div class="t" style="left:883.40px;top:135.41px;font-size:19px;font-family:'Liberation Sans',sans-serif;transform:scaleX(0.8740);color:#8c8c8c;">Delete</div>
<div class="t" style="left:989.90px;top:85.41px;font-size:19px;font-family:'Liberation Sans',sans-serif;transform:scaleX(0.8874);color:#8c8c8c;">Previous</div>
<div class="t" style="left:989.90px;top:121.41px;font-size:19px;font-family:'Liberation Sans',sans-serif;transform:scaleX(0.8982);color:#8c8c8c;">Next</div>
<div class="t" style="left:989.90px;top:157.71px;font-size:19px;font-family:'Liberation Sans',sans-serif;transform:scaleX(0.9396);color:#8c8c8c;">Edit Comment</div>
<div class="t" style="left:1159.60px;top:85.51px;font-size:19px;font-family:'Liberation Sans',sans-serif;transform:scaleX(0.9497);color:#000;">Highlight Commented Text</div>
<div class="t" style="left:1159.60px;top:121.71px;font-size:19px;font-family:'Liberation Sans',sans-serif;transform:scaleX(0.9304);color:#000;">Show Comments</div>
<div class="t" style="left:1159.60px;top:157.51px;font-size:19px;font-family:'Liberation Sans',sans-serif;transform:scaleX(0.9043);color:#000;">Comments...</div>
<div class="t" style="left:1034.00px;top:191.51px;font-size:17px;font-family:'Liberation Sans',sans-serif;transform:scaleX(1.0464);color:#595959;">Comments</div>
<div class="t" style="left:1415.70px;top:135.11px;font-size:19px;font-family:'Liberation Sans',sans-serif;transform:scaleX(0.8206);color:#000;">Track</div>
<div class="t" style="left:1400.60px;top:160.01px;font-size:19px;font-family:'Liberation Sans',sans-serif;transform:scaleX(0.8730);color:#000;">Changes</div>
<div class="t" style="left:1525.80px;top:85.81px;font-size:19px;font-family:'Liberation Sans',sans-serif;transform:scaleX(0.9089);color:#000;">Accept</div>
<div class="t" style="left:1525.80px;top:121.51px;font-size:19px;font-family:'Liberation Sans',sans-serif;transform:scaleX(0.8337);color:#000;">Reject</div>
<div class="t" style="left:1525.80px;top:157.81px;font-size:19px;font-family:'Liberation Sans',sans-serif;transform:scaleX(0.8637);color:#000;">Tracked Changes...</div>
<div class="t" style="left:1748.50px;top:86.01px;font-size:19px;font-family:'Liberation Sans',sans-serif;transform:scaleX(0.8942);color:#000;">Previous</div>
<div class="t" style="left:1748.50px;top:121.81px;font-size:19px;font-family:'Liberation Sans',sans-serif;transform:scaleX(0.8982);color:#000;">Next</div>
<div class="t" style="left:1748.50px;top:157.61px;font-size:19px;font-family:'Liberation Sans',sans-serif;transform:scaleX(0.9348);color:#000;">Show Markup</div>
<div class="t" style="left:1585.40px;top:191.11px;font-size:17px;font-family:'Liberation Sans',sans-serif;transform:scaleX(0.9821);color:#595959;">Track Changes</div>
<div class="t" style="left:1910.60px;top:136.01px;font-size:19px;font-family:'Liberation Sans',sans-serif;transform:scaleX(0.8977);color:#000;">Language</div>
<div class="t" style="left:13.40px;top:227.64px;font-size:33.5px;font-family:'Liberation Sans',sans-serif;transform:scaleX(0.9104);color:#2857a4;-webkit-text-stroke:0.7px #f8f8f8;">Tracked Changes</div>
<div class="t" style="left:18.30px;top:286.76px;font-size:18px;font-family:'Liberation Sans',sans-serif;transform:scaleX(0.9368);color:#000;">Tracked Changes: 20</div>
<div class="t" style="left:56.80px;top:330.22px;font-size:21px;font-family:'Liberation Sans',sans-serif;transform:scaleX(0.9869);color:#444;">Text Deleted</div>
<div class="t" style="left:29.60px;top:369.88px;font-size:22px;font-family:'Liberation Serif',serif;transform:scaleX(1.0844);color:#000;">sensitive business information</div>
<div class="t" style="left:82.30px;top:423.06px;font-size:18px;font-family:'Liberation Sans',sans-serif;transform:scaleX(0.9743);color:#555;">Carol Lee (7/6/2025 11:52:25 AM)</div>
<div class="t" style="left:56.60px;top:497.97px;font-size:21px;font-family:'Liberation Sans',sans-serif;transform:scaleX(0.9781);color:#444;">Text Inserted</div>
<div class="t" style="left:34.00px;top:537.63px;font-size:22px;font-family:'Liberation Serif',serif;color:#000;transform:scaleX(1.078);">Security reviews should be performed a</div>
<div class="t" style="left:82.30px;top:590.81px;font-size:18px;font-family:'Liberation Sans',sans-serif;transform:scaleX(0.9688);color:#555;">David Chen (6/26/2025 6:03:19 PM)</div>
<div class="t" style="left:56.80px;top:665.72px;font-size:21px;font-family:'Liberation Sans',sans-serif;transform:scaleX(0.9869);color:#3d3340;">Text Deleted</div>
<div class="t" style="left:29.60px;top:705.38px;font-size:22px;font-family:'Liberation Serif',serif;transform:scaleX(1.0761);color:#000;">protect confidential information</div>
<div class="t" style="left:82.30px;top:758.56px;font-size:18px;font-family:'Liberation Sans',sans-serif;transform:scaleX(0.9667);color:#555;">Eva Martinez (3/19/2025 5:27:44 PM)</div>
<div class="t" style="left:56.60px;top:833.47px;font-size:21px;font-family:'Liberation Sans',sans-serif;transform:scaleX(0.9781);color:#444;">Text Inserted</div>
<div class="t" style="left:33.60px;top:873.13px;font-size:22px;font-family:'Liberation Serif',serif;color:#000;transform:scaleX(1.061);">All confidential documents must be clea</div>
<div class="t" style="left:82.30px;top:926.31px;font-size:18px;font-family:'Liberation Sans',sans-serif;transform:scaleX(0.9697);color:#555;">Alice Johnson (8/1/2025 2:55:28 PM)</div>
<div class="t" style="left:56.80px;top:1001.22px;font-size:21px;font-family:'Liberation Sans',sans-serif;transform:scaleX(0.9869);color:#444;">Text Deleted</div>
<div class="t" style="left:29.60px;top:1040.88px;font-size:22px;font-family:'Liberation Serif',serif;transform:scaleX(1.0950);color:#000;">intended business purpose</div>
<div class="t" style="left:82.30px;top:1094.06px;font-size:18px;font-family:'Liberation Sans',sans-serif;transform:scaleX(0.9856);color:#555;">Bob Smith (1/27/2026 6:47:00 AM)</div>
<div class="t" style="left:56.60px;top:1168.97px;font-size:21px;font-family:'Liberation Sans',sans-serif;transform:scaleX(0.9781);color:#444;">Text Inserted</div>
<div class="t" style="left:44.30px;top:1250.76px;font-size:18px;font-family:'Liberation Sans',sans-serif;transform:scaleX(0.9776);color:#000;">Accept</div>
<div class="t" style="left:176.20px;top:1250.76px;font-size:18px;font-family:'Liberation Sans',sans-serif;transform:scaleX(0.8877);color:#000;">Reject</div>
<div class="t" style="left:828.00px;top:412.79px;font-size:26px;font-family:'Liberation Sans',sans-serif;font-weight:700;transform:scaleX(0.9006);color:#2f5e98;">Section 7</div>
<div class="t" style="left:827.00px;top:449.53px;font-size:22px;font-family:'Liberation Serif',serif;transform:scaleX(1.0698);color:#000;">This section describes the obligations of the parties regarding confidential information. The</div>
<div class="t" style="left:827.00px;top:478.98px;font-size:22px;font-family:'Liberation Serif',serif;transform:scaleX(1.0764);color:#000;">receiving party agrees to protect confidential information with reasonable care and use it</div>
<div class="t" style="left:827.00px;top:508.43px;font-size:22px;font-family:'Liberation Serif',serif;transform:scaleX(1.0808);color:#000;">only for the intended business purpose described in this agreement. The parties</div>
<div class="t" style="left:827.00px;top:537.88px;font-size:22px;font-family:'Liberation Serif',serif;transform:scaleX(1.0691);color:#000;">acknowledge that sensitive business information may be exchanged during collaboration.</div>
<div class="t" style="left:827.00px;top:567.33px;font-size:22px;font-family:'Liberation Serif',serif;transform:scaleX(1.0698);color:#000;">This section describes the obligations of the parties regarding confidential information. The</div>
<div class="t" style="left:827.00px;top:596.78px;font-size:22px;font-family:'Liberation Serif',serif;transform:scaleX(1.0764);color:#000;">receiving party agrees to protect confidential information with reasonable care and use it</div>
<div class="t" style="left:827.00px;top:626.23px;font-size:22px;font-family:'Liberation Serif',serif;transform:scaleX(1.0808);color:#000;">only for the intended business purpose described in this agreement. The parties</div>
<div class="t" style="left:827.00px;top:655.68px;font-size:22px;font-family:'Liberation Serif',serif;transform:scaleX(1.0691);color:#000;">acknowledge that sensitive business information may be exchanged during collaboration.</div>
<div class="t" style="left:827.00px;top:686.13px;font-size:22px;font-family:'Liberation Serif',serif;transform:scaleX(1.0782);color:#8b1c88;">protect confidential information</div>
<div class="t" style="left:827.00px;top:734.68px;font-size:22px;font-family:'Liberation Serif',serif;transform:scaleX(1.0698);color:#000;">This section describes the obligations of the parties regarding confidential information. The</div>
<div class="t" style="left:827.00px;top:764.13px;font-size:22px;font-family:'Liberation Serif',serif;transform:scaleX(1.0764);color:#000;">receiving party agrees to protect confidential information with reasonable care and use it</div>
<div class="t" style="left:827.00px;top:793.58px;font-size:22px;font-family:'Liberation Serif',serif;transform:scaleX(1.0808);color:#000;">only for the intended business purpose described in this agreement. The parties</div>
<div class="t" style="left:827.00px;top:823.03px;font-size:22px;font-family:'Liberation Serif',serif;transform:scaleX(1.0691);color:#000;">acknowledge that sensitive business information may be exchanged during collaboration.</div>
<div class="t" style="left:827.00px;top:852.48px;font-size:22px;font-family:'Liberation Serif',serif;transform:scaleX(1.0698);color:#000;">This section describes the obligations of the parties regarding confidential information. The</div>
<div class="t" style="left:827.00px;top:881.93px;font-size:22px;font-family:'Liberation Serif',serif;transform:scaleX(1.0764);color:#000;">receiving party agrees to protect confidential information with reasonable care and use it</div>
<div class="t" style="left:827.00px;top:911.38px;font-size:22px;font-family:'Liberation Serif',serif;transform:scaleX(1.0808);color:#000;">only for the intended business purpose described in this agreement. The parties</div>
<div class="t" style="left:827.00px;top:940.83px;font-size:22px;font-family:'Liberation Serif',serif;transform:scaleX(1.0691);color:#000;">acknowledge that sensitive business information may be exchanged during collaboration.</div>
<div class="t" style="left:827.00px;top:990.28px;font-size:22px;font-family:'Liberation Serif',serif;transform:scaleX(1.0698);color:#000;">This section describes the obligations of the parties regarding confidential information. The</div>
<div class="t" style="left:827.00px;top:1019.73px;font-size:22px;font-family:'Liberation Serif',serif;transform:scaleX(1.0764);color:#000;">receiving party agrees to protect confidential information with reasonable care and use it</div>
<div class="t" style="left:827.00px;top:1049.18px;font-size:22px;font-family:'Liberation Serif',serif;transform:scaleX(1.0808);color:#000;">only for the intended business purpose described in this agreement. The parties</div>
<div class="t" style="left:827.00px;top:1078.63px;font-size:22px;font-family:'Liberation Serif',serif;transform:scaleX(1.0691);color:#000;">acknowledge that sensitive business information may be exchanged during collaboration.</div>
<div class="t" style="left:827.00px;top:1108.08px;font-size:22px;font-family:'Liberation Serif',serif;transform:scaleX(1.0698);color:#000;">This section describes the obligations of the parties regarding confidential information. The</div>
<div class="t" style="left:827.00px;top:1137.53px;font-size:22px;font-family:'Liberation Serif',serif;transform:scaleX(1.0764);color:#000;">receiving party agrees to protect confidential information with reasonable care and use it</div>
<div class="t" style="left:827.00px;top:1166.98px;font-size:22px;font-family:'Liberation Serif',serif;transform:scaleX(1.0808);color:#000;">only for the intended business purpose described in this agreement. The parties</div>
<div class="t" style="left:827.00px;top:1196.43px;font-size:22px;font-family:'Liberation Serif',serif;transform:scaleX(1.0691);color:#000;">acknowledge that sensitive business information may be exchanged during collaboration.</div>
<div class="t" style="left:827.00px;top:1246.18px;font-size:22px;font-family:'Liberation Serif',serif;transform:scaleX(1.0698);color:#000;">This section describes the obligations of the parties regarding confidential information. The</div>
<div class="t" style="left:827.00px;top:1275.68px;font-size:22px;font-family:'Liberation Serif',serif;transform:scaleX(1.0764);color:#000;">receiving party agrees to protect confidential information with reasonable care and use it</div>
<div style="position:absolute;left:404px;top:321px;width:26px;height:874px;background:#f0f0f0"></div>
<div style="position:absolute;left:29px;top:1195px;width:401px;height:26px;background:#f0f0f0"></div>
<div style="position:absolute;left:414px;top:607px;width:5px;height:185px;background:#858585;border-radius:3px"></div>
<div style="position:absolute;left:55px;top:1205px;width:129px;height:5px;background:#858585;border-radius:3px"></div>
<div style="position:absolute;left:17px;top:1221px;width:414px;height:1px;background:#adadad"></div>
<div style="position:absolute;left:430px;top:319px;width:1px;height:903px;background:#adadad"></div>
<div style="position:absolute;left:0px;top:1297px;width:2054px;height:34px;background:#2b579a"></div>
<div class="t" style="left:29.20px;top:1306.36px;font-size:18px;font-family:'Liberation Sans',sans-serif;transform:scaleX(0.9730);color:#fff;">Section: 1/1</div>
<div class="t" style="left:161.90px;top:1306.36px;font-size:18px;font-family:'Liberation Sans',sans-serif;transform:scaleX(0.9650);color:#fff;">Page: 13/40</div>
<div class="t" style="left:283.60px;top:1306.36px;font-size:18px;font-family:'Liberation Sans',sans-serif;transform:scaleX(0.9311);color:#fff;">Line: 11</div>
<div class="t" style="left:380.20px;top:1306.36px;font-size:18px;font-family:'Liberation Sans',sans-serif;transform:scaleX(0.9726);color:#fff;">Column: 6</div>
<div class="t" style="left:508.40px;top:1306.36px;font-size:18px;font-family:'Liberation Sans',sans-serif;transform:scaleX(0.9517);color:#fff;">English (United States)</div>
<div class="t" style="left:844.80px;top:1306.36px;font-size:18px;font-family:'Liberation Sans',sans-serif;transform:scaleX(0.9561);color:#fff;">NUM</div>
<div class="t" style="left:1983.30px;top:1306.36px;font-size:18px;font-family:'Liberation Sans',sans-serif;transform:scaleX(0.9360);color:#fff;">100%</div>
<div style="position:absolute;left:147px;top:1300px;width:2px;height:28px;background:#fff"></div>
<div style="position:absolute;left:268px;top:1300px;width:2px;height:28px;background:#fff"></div>
<div style="position:absolute;left:366px;top:1300px;width:2px;height:28px;background:#fff"></div>
<div style="position:absolute;left:493px;top:1300px;width:2px;height:28px;background:#fff"></div>
<div style="position:absolute;left:697px;top:1300px;width:2px;height:28px;background:#fff"></div>
<div style="position:absolute;left:760px;top:1300px;width:2px;height:28px;background:#fff"></div>
<div style="position:absolute;left:830px;top:1300px;width:2px;height:28px;background:#fff"></div>
<div style="position:absolute;left:898px;top:1300px;width:2px;height:28px;background:#fff"></div>
<svg style="position:absolute;left:0;top:0" width="2054" height="1331" viewBox="0 0 2054 1331"><rect x="1708.9" y="1308" width="10.3" height="12" fill="none" stroke="#fff" stroke-width="2"/><rect x="1711" y="1311.1" width="6.1" height="1.7" fill="#fff"/><rect x="1711" y="1315" width="6.1" height="1.7" fill="#fff"/><path d="M1709.7 1306 L1714 1301.6 L1718.2 1306 Z M1709.7 1322 L1714 1326.1 L1718.2 1322 Z M1707.1 1308.8 L1701.6 1314 L1707.1 1319.1 Z M1720.9 1308.8 L1726.3 1314 L1720.9 1319.1 Z" fill="#fff"/><rect x="1737.8" y="1305.9" width="10.3" height="16.2" fill="none" stroke="#fff" stroke-width="2"/><rect x="1739.9" y="1309" width="6.1" height="1.7" fill="#fff"/><rect x="1739.9" y="1313" width="6.1" height="1.7" fill="#fff"/><rect x="1739.9" y="1317.1" width="6.1" height="1.7" fill="#fff"/><path d="M1736 1308.8 L1730.7 1314 L1736 1319.1 Z M1750 1308.8 L1755.3 1314 L1750 1319.1 Z" fill="#fff"/><rect x="1764.9" y="1313" width="12.3" height="3" fill="#fff"/><path d="M2054 1323 V1331 H2046 Q2053 1330 2054 1323 Z" fill="#222"/><path d="M0 1323 V1331 H8 Q1 1330 0 1323 Z" fill="#222"/><rect x="1792.6" y="1313" width="139" height="1.2" fill="#fff"/><rect x="1858.7" y="1306.8" width="6.7" height="14" fill="#fff"/><rect x="1947.7" y="1312.6" width="13.5" height="2.8" fill="#fff"/><rect x="1953.1" y="1307.3" width="2.8" height="13.5" fill="#fff"/></svg>
</body></html>
